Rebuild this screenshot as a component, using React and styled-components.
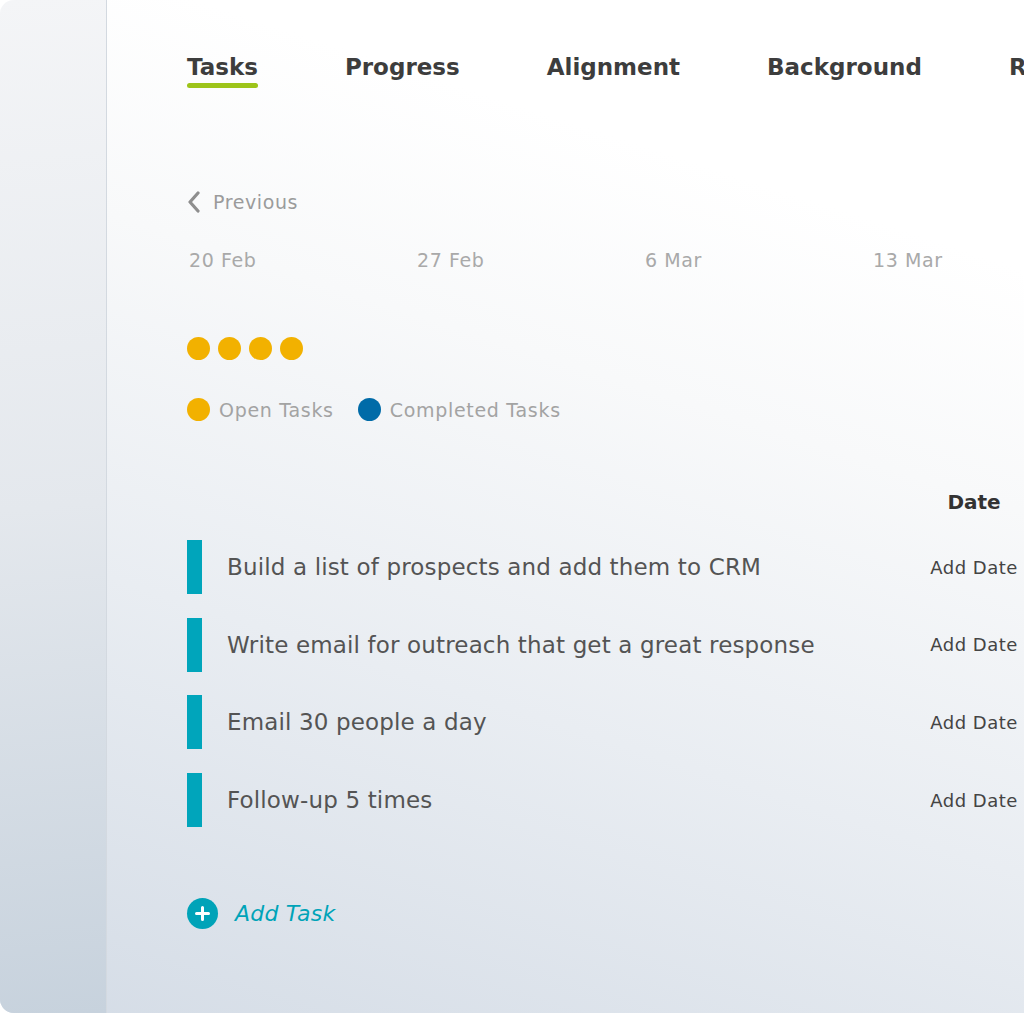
import React from 'react'
import styled, { createGlobalStyle } from 'styled-components';

const Global = createGlobalStyle`
  html, body {
    margin: 0;
    padding: 0;
    background: #ffffff;
    overflow: hidden;
  }
  body {
    font-family: "DejaVu Sans", "Liberation Sans", sans-serif;
  }
`;

const Card = styled.div`
  display: flex;
  width: 1024px;
  height: 1013px;
  border-radius: 14px 0 0 14px;
  overflow: hidden;
  background: linear-gradient(18deg, #d4dce6 0%, #e9edf2 35%, #f8f9fa 62%, #ffffff 80%);
`;

const Sidebar = styled.div`
  width: 106px;
  flex-shrink: 0;
  border-right: 1px solid #d3d9e0;
  background: linear-gradient(175deg, #f4f5f7 0%, #e4e8ed 50%, #c7d2dd 100%);
`;

const Main = styled.div`
  flex: 1;
  min-width: 0;
  overflow: hidden;
  padding: 52px 0 0 80px;
  display: flex;
  flex-direction: column;
`;

const Tabs = styled.div`
  display: flex;
  gap: 87px;
  white-space: nowrap;
`;

const Tab = styled.div`
  display: flex;
  flex-direction: column;
  gap: 1px;
  font-size: 23px;
  font-weight: 700;
  color: #3d3d3d;
  line-height: 30px;

  &::after {
    content: '';
    height: 5px;
    border-radius: 3px;
    background: ${p => (p.$active ? '#9dc41a' : 'transparent')};
  }
`;

const Prev = styled.div`
  margin-top: 99px;
  display: flex;
  align-items: center;
  gap: 12px;
  font-size: 19px;
  letter-spacing: 0.6px;
  color: #9b9b9b;
  height: 30px;
`;

const Dates = styled.div`
  margin-top: 28px;
  display: grid;
  grid-template-columns: repeat(4, 228px);
  font-size: 19px;
  letter-spacing: 0.6px;
  color: #a9a9a9;
  padding-left: 2px;
  line-height: 30px;
`;

const Dots = styled.div`
  margin-top: 62px;
  display: flex;
  gap: 8px;
`;

const Dot = styled.span`
  width: 23px;
  height: 23px;
  border-radius: 50%;
  background: ${p => p.$color};
  flex-shrink: 0;
`;

const Legend = styled.div`
  margin-top: 38px;
  display: flex;
  align-items: center;
  gap: 24px;
`;

const LegendItem = styled.div`
  display: flex;
  align-items: center;
  gap: 9px;
  font-size: 19px;
  letter-spacing: 0.7px;
  color: #a3a3a3;
  white-space: nowrap;
`;

const TableHead = styled.div`
  margin-top: 66px;
  display: grid;
  grid-template-columns: 743px 88px;
  font-size: 20px;
  font-weight: 600;
  color: #333333;
  line-height: 30px;
`;

const HeadCell = styled.div`
  grid-column: 2;
  text-align: center;
`;

const Rows = styled.div`
  margin-top: 23px;
  display: flex;
  flex-direction: column;
  gap: 23.7px;
`;

const Row = styled.div`
  display: grid;
  grid-template-columns: 15px 728px 88px;
  align-items: center;
  height: 54px;
`;

const Bar = styled.div`
  height: 54px;
  background: #00a5bb;
`;

const TaskText = styled.div`
  padding-left: 25px;
  font-size: 23px;
  letter-spacing: 0.15px;
  color: #545454;
  white-space: nowrap;
`;

const AddDate = styled.div`
  font-size: 18px;
  letter-spacing: 0.5px;
  color: #444444;
  text-align: center;
  white-space: nowrap;
`;

const AddTask = styled.div`
  margin-top: 71px;
  display: flex;
  align-items: center;
  gap: 17px;
  font-size: 22px;
  letter-spacing: 0.2px;
  font-style: italic;
  color: #00a3b8;
`;

const Plus = styled.span`
  width: 31px;
  height: 31px;
  border-radius: 50%;
  background: #00a3b8;
  display: flex;
  align-items: center;
  justify-content: center;
`;

const tasks = [
  'Build a list of prospects and add them to CRM',
  'Write email for outreach that get a great response',
  'Email 30 people a day',
  'Follow-up 5 times',
];

const App = () => {
  return (
    <>
      <Global />
      <Card>
        <Sidebar />
        <Main>
          <Tabs>
            <Tab $active>Tasks</Tab>
            <Tab>Progress</Tab>
            <Tab>Alignment</Tab>
            <Tab>Background</Tab>
            <Tab>Resources</Tab>
          </Tabs>

          <Prev>
            <svg width="14" height="22" viewBox="0 0 14 22">
              <path d="M11 2 L3 11 L11 20" fill="none" stroke="#8e8e8e" strokeWidth="3.2" strokeLinecap="round" strokeLinejoin="round" />
            </svg>
            Previous
          </Prev>

          <Dates>
            <span>20 Feb</span>
            <span>27 Feb</span>
            <span>6 Mar</span>
            <span>13 Mar</span>
          </Dates>

          <Dots>
            <Dot $color="#f2b100" />
            <Dot $color="#f2b100" />
            <Dot $color="#f2b100" />
            <Dot $color="#f2b100" />
          </Dots>

          <Legend>
            <LegendItem><Dot $color="#f2b100" />Open Tasks</LegendItem>
            <LegendItem><Dot $color="#006ba8" />Completed Tasks</LegendItem>
          </Legend>

          <TableHead>
            <HeadCell>Date</HeadCell>
          </TableHead>

          <Rows>
            {tasks.map(t => (
              <Row key={t}>
                <Bar />
                <TaskText>{t}</TaskText>
                <AddDate>Add Date</AddDate>
              </Row>
            ))}
          </Rows>

          <AddTask>
            <Plus>
              <svg width="15" height="15" viewBox="0 0 15 15">
                <path d="M7.5 1.5 V13.5 M1.5 7.5 H13.5" stroke="#ffffff" strokeWidth="3" strokeLinecap="round" />
              </svg>
            </Plus>
            Add Task
          </AddTask>
        </Main>
      </Card>
    </>
  )
}

export default App
